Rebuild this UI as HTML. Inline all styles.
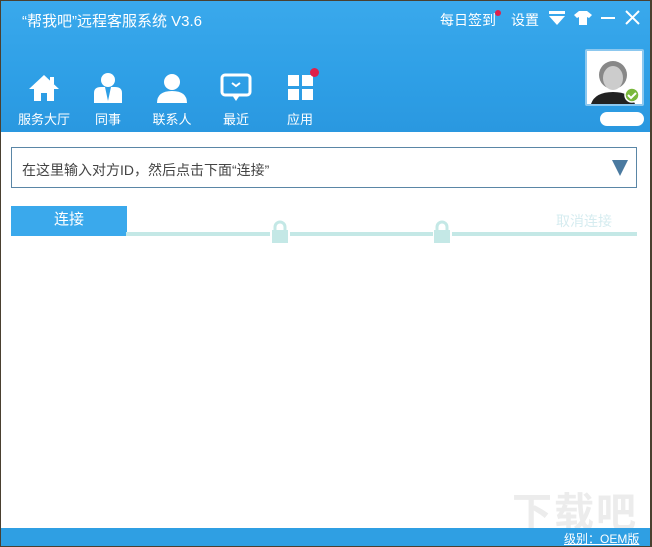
<!DOCTYPE html>
<html><head><meta charset="utf-8"><style>
*{margin:0;padding:0;box-sizing:border-box}
body{width:652px;height:547px;overflow:hidden;background:#fff;font-family:"Liberation Sans","Noto Sans CJK SC",sans-serif;position:relative}
.win{position:absolute;left:0;top:0;width:652px;height:547px;border:1px solid #4a4030;border-right:2px solid #4a4030}
.hdr{position:absolute;left:0;top:0;width:652px;height:132px;background:linear-gradient(180deg,#3aa9ec 0%,#2e9fe6 60%,#2a98e0 100%)}
.t{position:absolute;color:#fff;font-size:15px;white-space:nowrap}
.nav{position:absolute;top:73px;width:60px;text-align:center;color:#fff;font-size:13px}
.nav svg{display:block;margin:0 auto 6px}
.inp{position:absolute;left:11px;top:147px;width:626px;height:41px;border:1px solid #5a86a6;background:#fff}
.inp span{position:absolute;left:10px;top:12px;font-size:14px;color:#444}
.btn{position:absolute;left:11px;top:206px;width:116px;height:30px;background:#3aa9ec;color:#fff;font-size:15px;text-align:center;line-height:28px}
.line{position:absolute;top:232px;height:4px;background:#c4e8e6}
.lock{position:absolute;top:219px}
.foot{position:absolute;left:0;top:528px;width:652px;height:19px;background:#2f9fe3}
</style></head><body>
<div class="hdr"></div>
<div class="t" style="left:22px;top:10px">“帮我吧”远程客服系统 V3.6</div>
<div class="t" style="left:440px;top:10px;font-size:14px">每日签到</div>
<div style="position:absolute;left:495px;top:10px;width:6px;height:6px;border-radius:50%;background:#e0204a"></div>
<div class="t" style="left:511px;top:10px;font-size:14px">设置</div>
<svg style="position:absolute;left:549px;top:11px" width="16" height="14"><rect x="0" y="0" width="16" height="3" fill="#fff"/><path d="M0 5h16l-8 9z" fill="#fff"/></svg>
<svg style="position:absolute;left:574px;top:11px" width="18" height="14"><path d="M5 0h8l5 4-3 3-2-1v8H5V6L3 7 0 4z" fill="#fff"/></svg>
<div style="position:absolute;left:601px;top:17px;width:14px;height:2px;background:#fff"></div>
<svg style="position:absolute;left:625px;top:10px" width="15" height="15"><path d="M1 1L14 14M14 1L1 14" stroke="#fff" stroke-width="2"/></svg>

<div class="nav" style="left:14px"><svg width="32" height="30"><path d="M16 2L1 16h5v12h7v-8h6v8h7V16h5L16 2z" fill="#fff"/><rect x="22" y="4" width="4" height="7" fill="#fff"/></svg>服务大厅</div>
<div class="nav" style="left:78px"><svg width="32" height="30"><circle cx="16" cy="7" r="7" fill="#fff"/><path d="M2 30V20q0-6 7-6h14q7 0 7 6v10z" fill="#fff"/><path d="M13 14l3 14 3-14z" fill="#2e9fe6"/></svg>同事</div>
<div class="nav" style="left:142px"><svg width="32" height="30"><circle cx="16" cy="9" r="8" fill="#fff"/><path d="M1 30q0-12 15-12t15 12z" fill="#fff"/></svg>联系人</div>
<div class="nav" style="left:206px"><svg width="32" height="30"><rect x="2" y="2" width="28" height="20" rx="3" fill="none" stroke="#fff" stroke-width="3"/><path d="M12 22l4 6 4-6z" fill="#fff"/><path d="M12 10l4 3 4-3" stroke="#fff" stroke-width="2" fill="none"/></svg>最近</div>
<div class="nav" style="left:270px"><svg width="32" height="30"><rect x="4" y="2" width="11" height="11" fill="#fff"/><rect x="18" y="2" width="11" height="11" fill="#fff"/><rect x="4" y="16" width="11" height="11" fill="#fff"/><rect x="18" y="16" width="11" height="11" fill="#fff"/></svg>应用</div>
<div style="position:absolute;left:310px;top:68px;width:9px;height:9px;border-radius:50%;background:#e0204a"></div>

<div style="position:absolute;left:585px;top:49px;width:59px;height:57px;border:2px solid #8cc8ef;background:#fff;border-radius:2px;overflow:hidden">
<svg width="55" height="53"><circle cx="26" cy="24" r="14" fill="#888"/><ellipse cx="26" cy="27" rx="10" ry="12" fill="#ccc"/><path d="M4 53q4-12 22-12t22 12z" fill="#222"/><circle cx="45" cy="44" r="7" fill="#7ab83c" stroke="#fff" stroke-width="1.5"/><path d="M41 44l3 3 5-5" stroke="#fff" stroke-width="2" fill="none"/></svg></div>
<div style="position:absolute;left:600px;top:112px;width:44px;height:14px;border-radius:7px;background:#fff"></div>

<div class="inp"><span>在这里输入对方ID，然后点击下面“连接”</span>
<svg style="position:absolute;right:8px;top:12px" width="16" height="16"><path d="M0 0h16L8 16z" fill="#4a7aa0"/></svg></div>
<div class="btn">连接</div>
<div class="line" style="left:126px;width:144px"></div>
<div class="line" style="left:290px;width:143px"></div>
<div class="line" style="left:452px;width:185px"></div>
<svg class="lock" style="left:270px" width="20" height="26"><path d="M5 12V8a5 5 0 0 1 10 0v4" stroke="#c4e8e6" stroke-width="3" fill="none"/><rect x="2" y="11" width="16" height="13" fill="#c4e8e6"/></svg>
<svg class="lock" style="left:432px" width="20" height="26"><path d="M5 12V8a5 5 0 0 1 10 0v4" stroke="#c4e8e6" stroke-width="3" fill="none"/><rect x="2" y="11" width="16" height="13" fill="#c4e8e6"/></svg>
<div class="t" style="left:556px;top:211px;color:#d6ecf0;font-size:14px">取消连接</div>

<div class="t" style="left:512px;top:480px;font-size:40px;color:#ececec;font-weight:bold;letter-spacing:2px">下载吧</div>
<div class="foot"></div>
<div class="t" style="left:564px;top:530px;font-size:12px;text-decoration:underline">级别：OEM版</div>
<div class="win"></div>
</body></html>
